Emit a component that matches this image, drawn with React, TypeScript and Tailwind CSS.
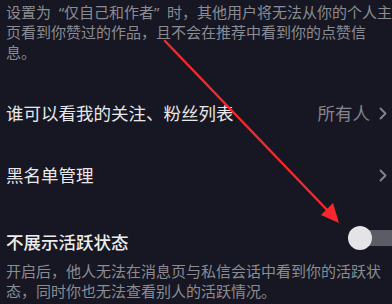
import React from "react";

function Chevron() {
  return (
    <svg width="8" height="13" viewBox="0 0 8 13" fill="none">
      <path d="M1.5 1.5 L6.5 6.5 L1.5 11.5" stroke="#85868d" strokeWidth="1.8" strokeLinecap="round" strokeLinejoin="round" />
    </svg>
  );
}

export default function App() {
  return (
    <div
      className="relative w-[392px] h-[304px] overflow-hidden bg-[#161722]"
      style={{ fontFamily: '"Noto Sans CJK SC", "Noto Sans", sans-serif' }}
    >
      <div className="pt-[2px] pl-[6px] text-[15px] leading-[20px] text-[#8b8c93] whitespace-nowrap">
        <div>
          设置为<span className="inline-block w-[13px] text-right font-['Noto_Sans']">“</span>仅自己和作者<span className="inline-block w-[13px] text-left font-['Noto_Sans']">”</span>时，其他用户将无法从你的个人主
        </div>
        <div>页看到你赞过的作品，且不会在推荐中看到你的点赞信</div>
        <div>息。</div>
      </div>
      <div className="mt-[20px] h-[62px] flex items-center justify-between pl-[6px] pr-[5px]">
        <span className="text-[17.5px] text-[#e8e8ea]">谁可以看我的关注、粉丝列表</span>
        <div className="flex items-center gap-[9px]">
          <span className="text-[17.5px] text-[#85868d]">所有人</span>
          <Chevron />
        </div>
      </div>
      <div className="h-[62px] flex items-center justify-between pl-[6px] pr-[5px]">
        <span className="text-[17.5px] text-[#e8e8ea]">黑名单管理</span>
        <Chevron />
      </div>
      <div className="mt-[23px] flex items-center justify-between pl-[6px]">
        <span className="text-[17.5px] leading-[26px] font-medium text-[#ececee]">不展示活跃状态</span>
        <div className="relative w-[44px] h-[24px] -mt-[8px]">
          <div className="absolute left-[8px] right-0 top-[4px] h-[16px] rounded-l-full bg-[#5b5c66]" />
          <div className="absolute left-0 top-0 w-[24px] h-[24px] rounded-full bg-[#e4e4e6]" />
        </div>
      </div>
      <div className="mt-[6px] pl-[6px] text-[15px] leading-[20px] text-[#8b8c93] whitespace-nowrap">
        <div>开启后，他人无法在消息页与私信会话中看到你的活跃状</div>
        <div>态，同时你也无法查看别人的活跃情况。</div>
      </div>
      <svg
        className="absolute left-0 top-0 pointer-events-none"
        width="392"
        height="304"
        viewBox="0 0 392 304"
      >
        <line x1="165" y1="41" x2="330" y2="213" stroke="#f5292b" strokeWidth="2.5" strokeLinecap="round" />
        <polygon points="339,223 321,215 333,203" fill="#f5292b" />
      </svg>
    </div>
  );
}
